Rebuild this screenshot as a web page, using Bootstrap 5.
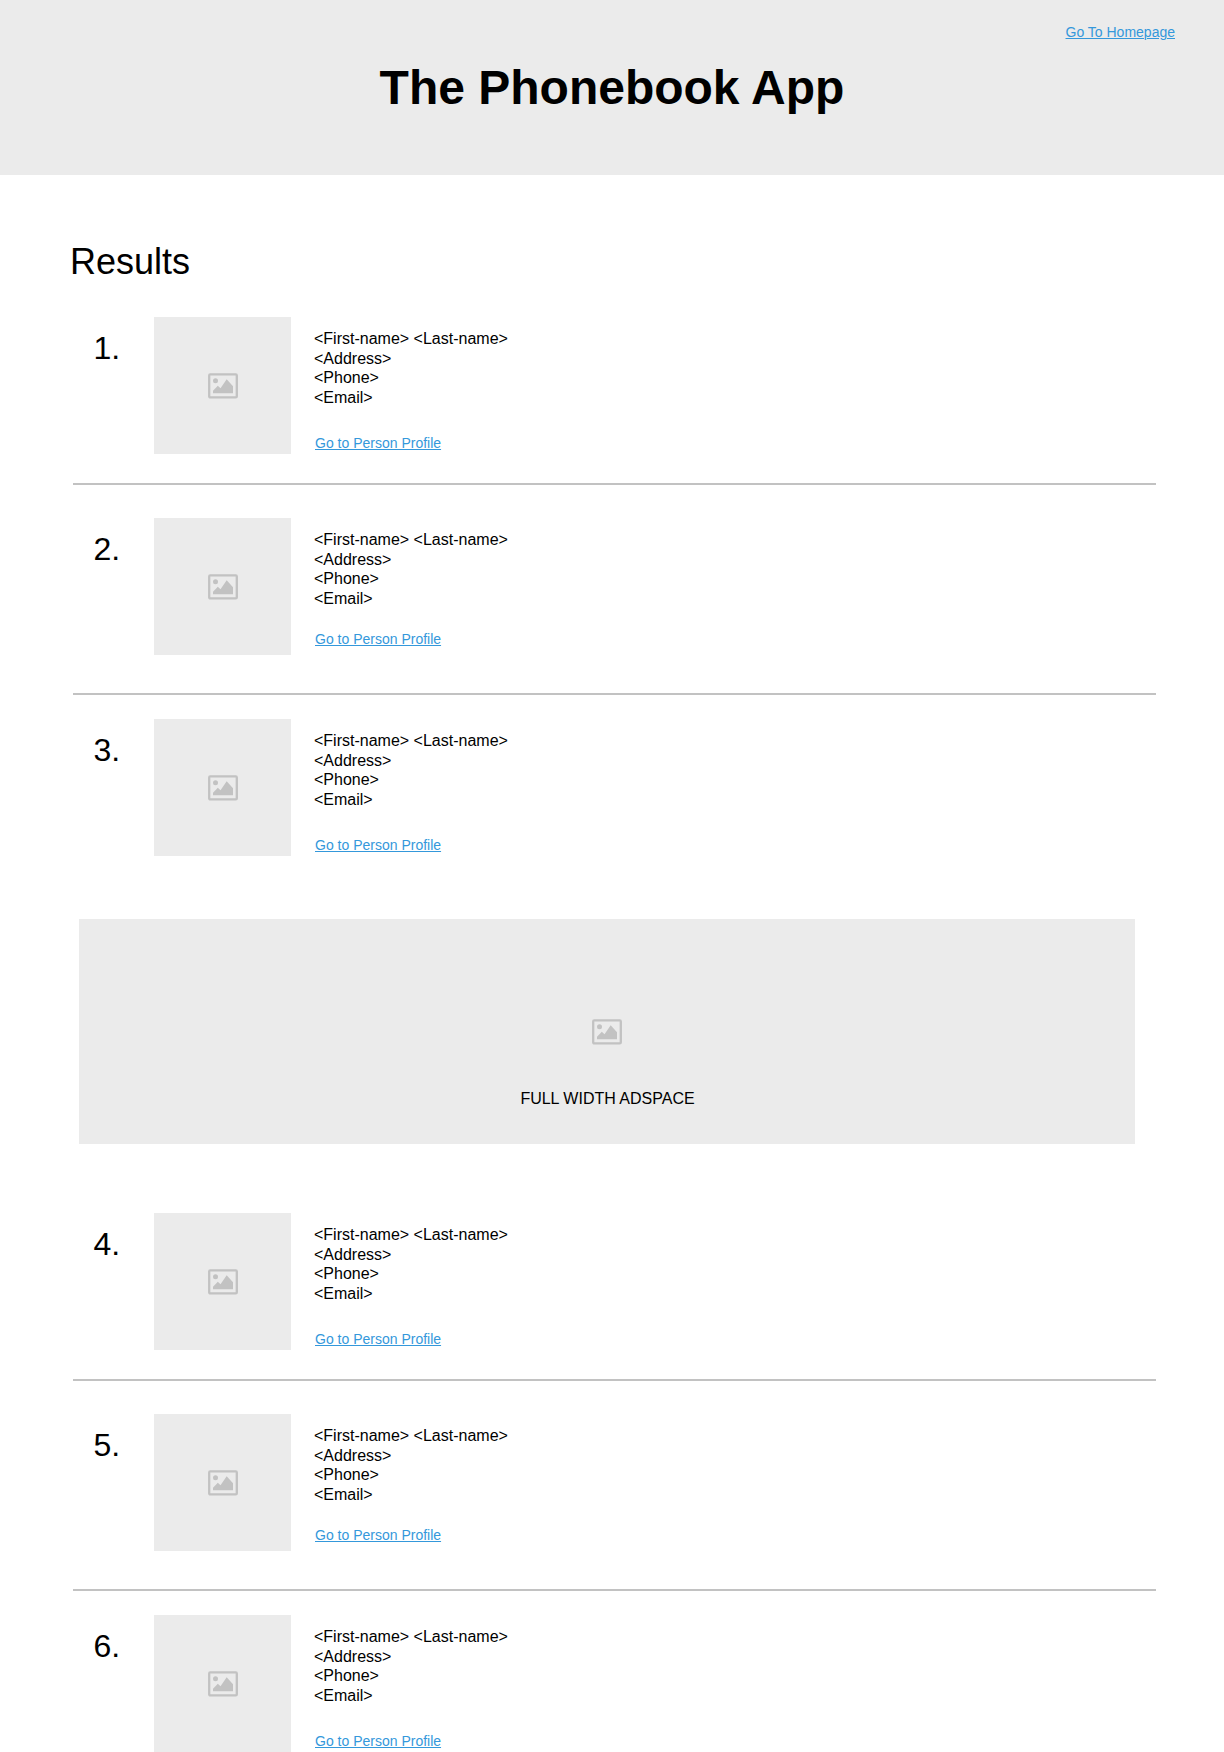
<!DOCTYPE html>
<html lang="en">
<head>
<meta charset="utf-8">
<meta name="viewport" content="width=device-width, initial-scale=1">
<title>The Phonebook App</title>
<link href="https://cdn.jsdelivr.net/npm/bootstrap@5.3.0/dist/css/bootstrap.min.css" rel="stylesheet">
<style>
  body { font-family: "Liberation Sans", Arial, sans-serif; font-size: 16px; line-height: 19.6px; color: #000; background: #fff; }
  a { color: #3498db; font-size: 14px; line-height: 16px; text-underline-offset: 1px; text-decoration-thickness: 1px; }
  .site-header { height: 175px; padding: 24px 49px 0; background: #ebebeb; }
  .site-title { font-size: 48px; line-height: 58px; margin-top: 19px; }
  .results { padding: 66px 68px 0 73px; }
  .results-title { font-size: 36px; line-height: 42px; margin: 0 0 34px -3px; font-weight: 400; }
  .person { height: 137px; padding-left: 20.5px; }
  .person-no { width: 60.5px; padding-top: 12px; font-size: 32px; line-height: 38px; }
  .thumb { width: 137px; background: #ebebeb; padding: 1px 0 0 1px; }
  .info { padding: 12px 0 0 23px; }
  .info a { margin: 27.5px 0 0 1px; }
  .info.tight a { margin-top: 22.5px; }
  .rule { height: 2px; background: #c2c2c2; }
  .after-first { margin: 29px 0 33px; }
  .after-second { margin: 38px 0 24px; }
  .adspace { height: 225px; width: 1056px; margin: 63px 0 69px 6px; padding-top: 100px; background: #ebebeb; }
  .adspace p { margin: 44px 0 0 1px; }
  .pic { width: 30px; height: 26px; color: #c2c2c2; }
</style>
<script src="https://cdn.jsdelivr.net/npm/bootstrap@5.3.0/dist/js/bootstrap.bundle.min.js"></script>
</head>
<body>
<svg class="d-none" aria-hidden="true">
  <symbol id="picture" viewBox="0 0 30 26">
    <rect x="1.2" y="1.4" width="27.6" height="23" rx="1" fill="none" stroke="currentColor" stroke-width="2.3"/>
    <circle cx="7.5" cy="7.8" r="2.5" fill="currentColor"/>
    <path d="M5 20.3V17.8l4.8-5 2.7 2.5L18.7 6.3 25 13.2v7.1z" fill="currentColor"/>
  </symbol>
</svg>

<header class="site-header d-flex flex-column">
  <a class="align-self-end" href="#">Go To Homepage</a>
  <h1 class="site-title fw-bold text-center mb-0">The Phonebook App</h1>
</header>

<main class="results">
  <h2 class="results-title">Results</h2>

  <article class="person d-flex">
    <div class="person-no">1.</div>
    <div class="thumb d-flex align-items-center justify-content-center"><svg class="pic"><use href="#picture"/></svg></div>
    <div class="info d-flex flex-column align-items-start">
      <div>&lt;First-name&gt; &lt;Last-name&gt;<br>&lt;Address&gt;<br>&lt;Phone&gt;<br>&lt;Email&gt;</div>
      <a href="#">Go to Person Profile</a>
    </div>
  </article>
  <div class="rule after-first"></div>

  <article class="person d-flex">
    <div class="person-no">2.</div>
    <div class="thumb d-flex align-items-center justify-content-center"><svg class="pic"><use href="#picture"/></svg></div>
    <div class="info tight d-flex flex-column align-items-start">
      <div>&lt;First-name&gt; &lt;Last-name&gt;<br>&lt;Address&gt;<br>&lt;Phone&gt;<br>&lt;Email&gt;</div>
      <a href="#">Go to Person Profile</a>
    </div>
  </article>
  <div class="rule after-second"></div>

  <article class="person d-flex">
    <div class="person-no">3.</div>
    <div class="thumb d-flex align-items-center justify-content-center"><svg class="pic"><use href="#picture"/></svg></div>
    <div class="info d-flex flex-column align-items-start">
      <div>&lt;First-name&gt; &lt;Last-name&gt;<br>&lt;Address&gt;<br>&lt;Phone&gt;<br>&lt;Email&gt;</div>
      <a href="#">Go to Person Profile</a>
    </div>
  </article>

  <aside class="adspace d-flex flex-column align-items-center">
    <svg class="pic"><use href="#picture"/></svg>
    <p>FULL WIDTH ADSPACE</p>
  </aside>

  <article class="person d-flex">
    <div class="person-no">4.</div>
    <div class="thumb d-flex align-items-center justify-content-center"><svg class="pic"><use href="#picture"/></svg></div>
    <div class="info d-flex flex-column align-items-start">
      <div>&lt;First-name&gt; &lt;Last-name&gt;<br>&lt;Address&gt;<br>&lt;Phone&gt;<br>&lt;Email&gt;</div>
      <a href="#">Go to Person Profile</a>
    </div>
  </article>
  <div class="rule after-first"></div>

  <article class="person d-flex">
    <div class="person-no">5.</div>
    <div class="thumb d-flex align-items-center justify-content-center"><svg class="pic"><use href="#picture"/></svg></div>
    <div class="info tight d-flex flex-column align-items-start">
      <div>&lt;First-name&gt; &lt;Last-name&gt;<br>&lt;Address&gt;<br>&lt;Phone&gt;<br>&lt;Email&gt;</div>
      <a href="#">Go to Person Profile</a>
    </div>
  </article>
  <div class="rule after-second"></div>

  <article class="person d-flex">
    <div class="person-no">6.</div>
    <div class="thumb d-flex align-items-center justify-content-center"><svg class="pic"><use href="#picture"/></svg></div>
    <div class="info d-flex flex-column align-items-start">
      <div>&lt;First-name&gt; &lt;Last-name&gt;<br>&lt;Address&gt;<br>&lt;Phone&gt;<br>&lt;Email&gt;</div>
      <a href="#">Go to Person Profile</a>
    </div>
  </article>
</main>
</body>
</html>
